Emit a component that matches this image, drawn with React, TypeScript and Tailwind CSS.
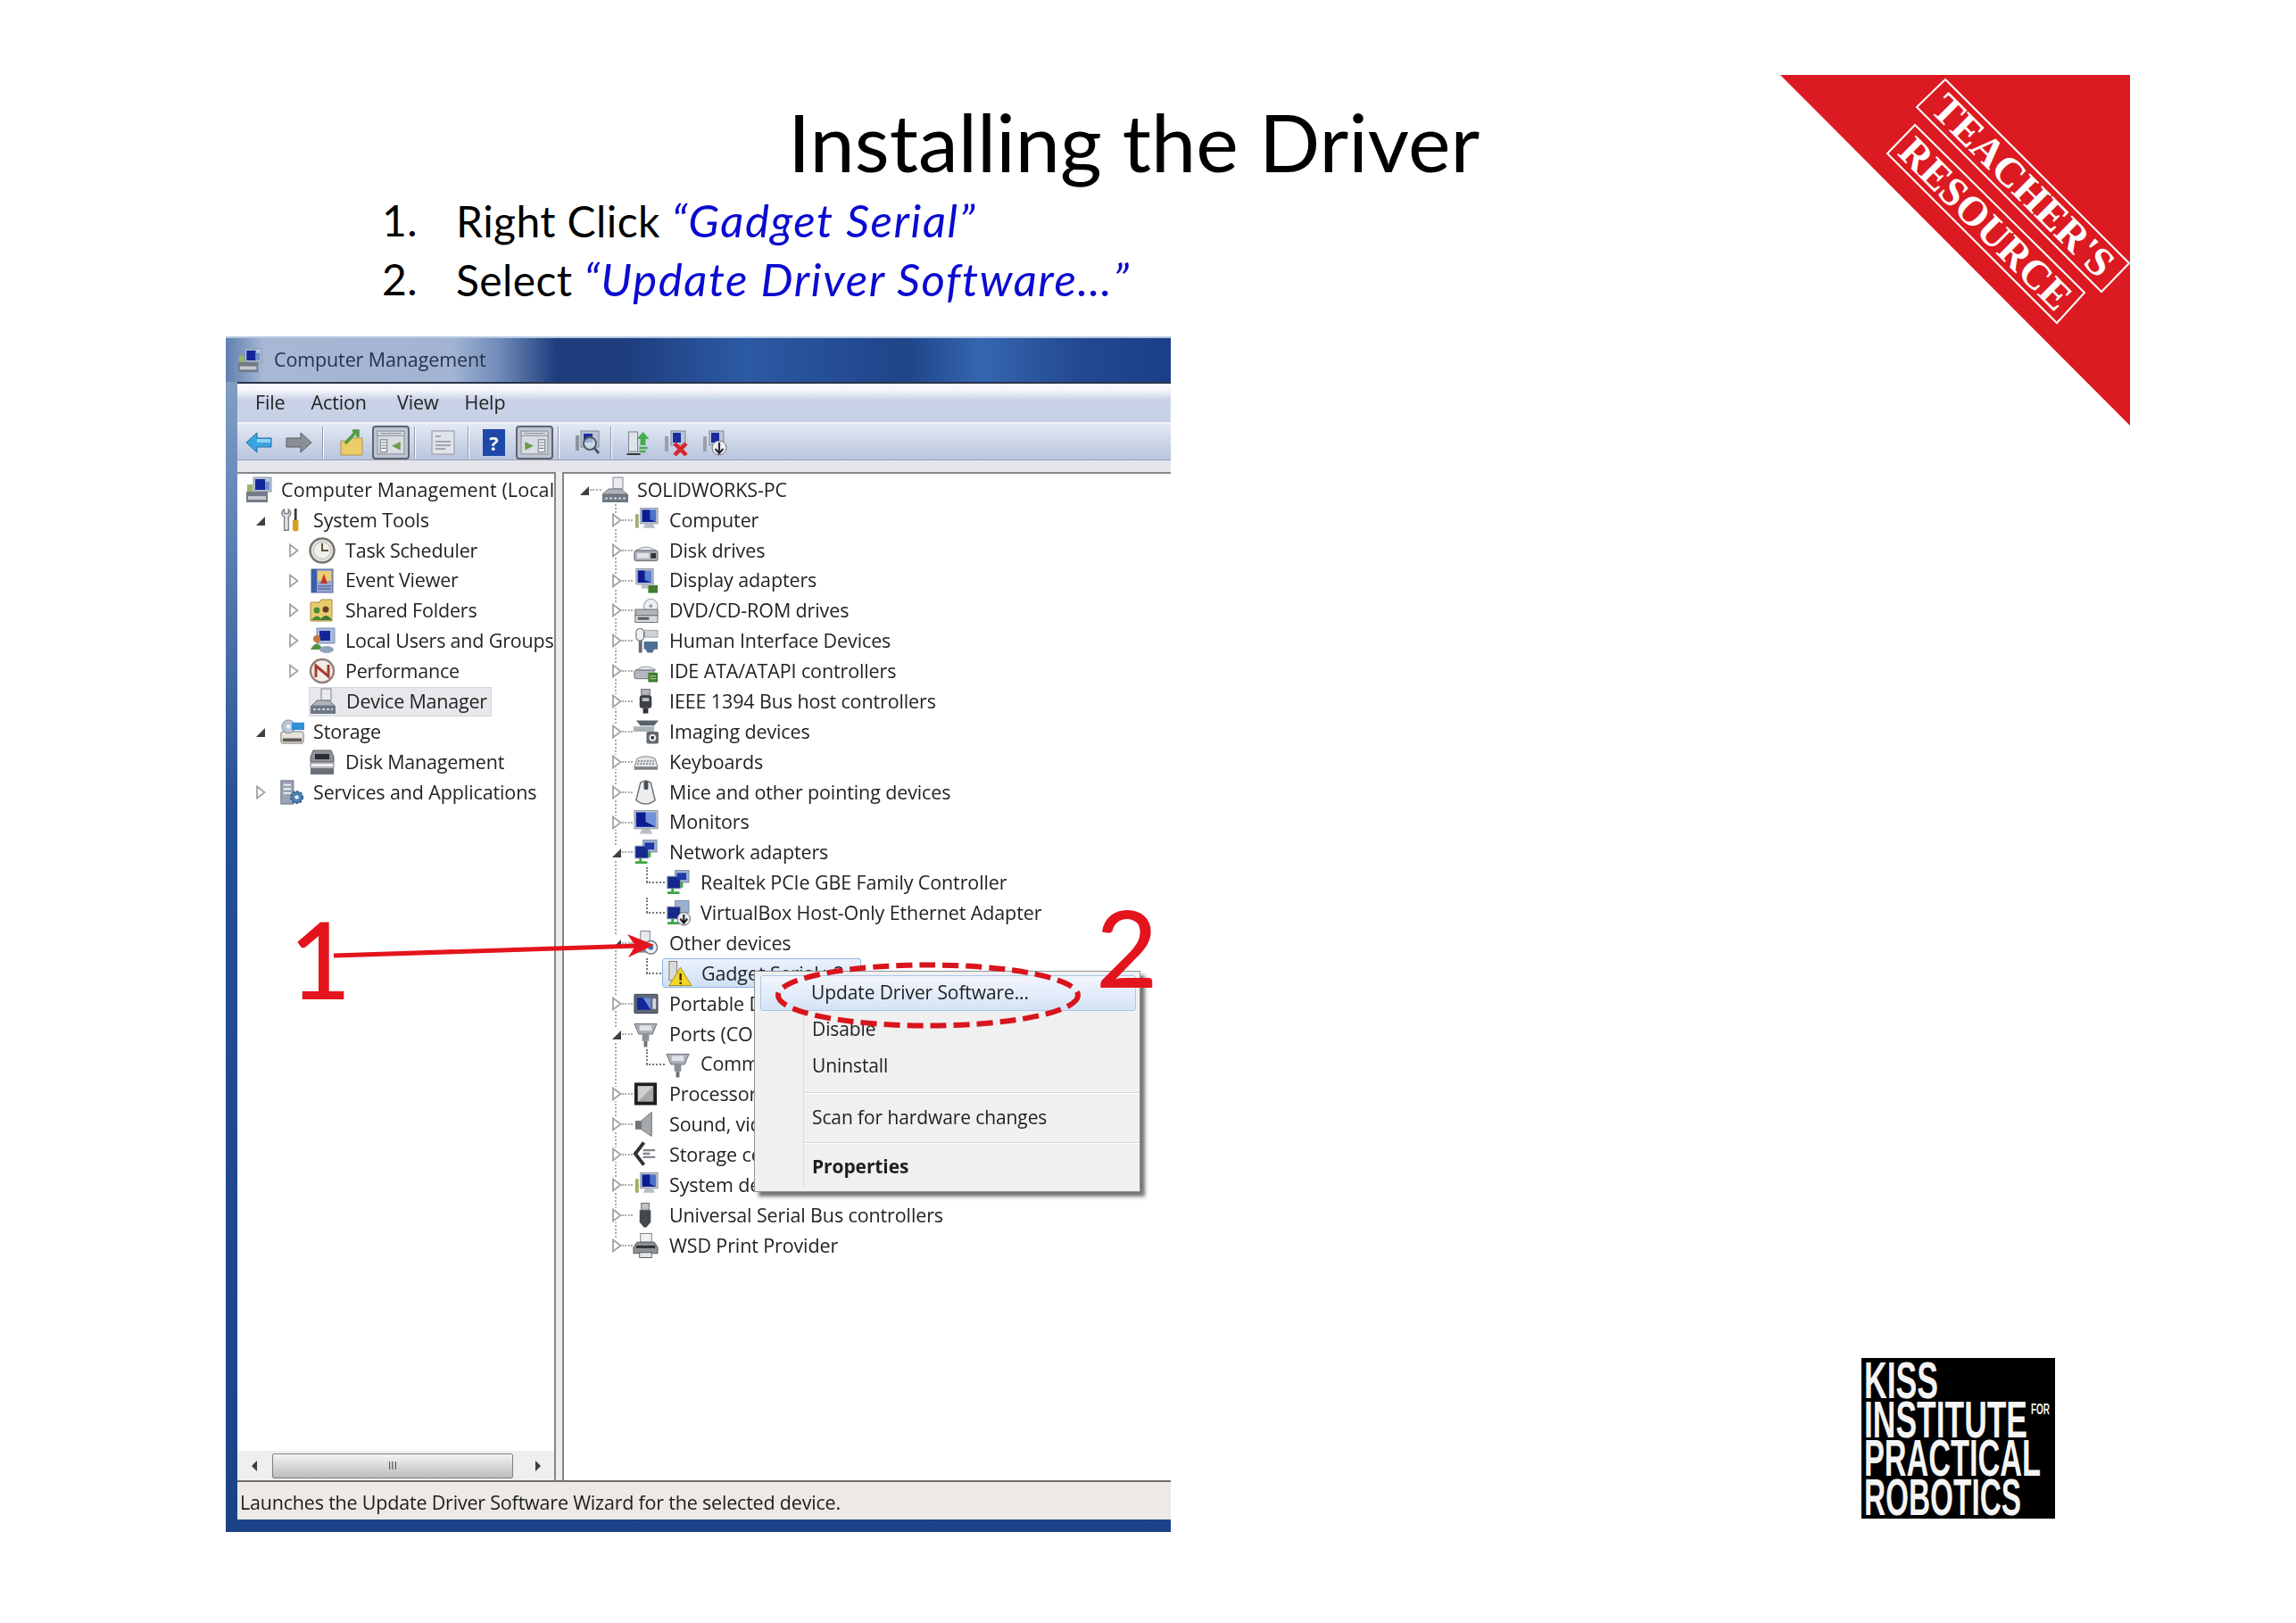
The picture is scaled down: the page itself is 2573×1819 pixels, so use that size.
import React from "react";

type IconKind =
  | "mgmt" | "tools" | "clock" | "event" | "shared" | "users" | "perf" | "devmgr" | "storage" | "diskmgmt" | "services"
  | "pc" | "computer" | "disk" | "display" | "dvd" | "hid" | "ide" | "ieee" | "imaging" | "keyboard" | "mouse" | "monitor"
  | "net" | "netdown" | "other" | "warn" | "portable" | "port" | "cpu" | "sound" | "ctrl" | "system" | "usb" | "printer";

function Icon({ kind, className }: { kind: IconKind; className: string }) {
  const body: Record<IconKind, React.ReactNode> = {
    mgmt: (<>
      <rect x="9" y="1" width="20" height="16" fill="#b9c4d6" stroke="#8995a8" />
      <rect x="11" y="3" width="11" height="12" fill="#14269c" />
      <rect x="22" y="6" width="5" height="9" fill="#6f8fd0" />
      <rect x="1" y="17" width="24" height="12" fill="#737b86" />
      <rect x="3" y="22" width="20" height="4" fill="#c5cad2" />
      <rect x="2" y="9" width="6" height="8" fill="#9bb46a" />
    </>),
    tools: (<>
      <path d="M6 2 C1 5 3 10 6 11 L6 27 L11 27 L11 11 C14 10 15 5 11 2 L11 7 L6 7 Z" fill="#e3e6ea" stroke="#7a7f88" strokeWidth="1.5" />
      <rect x="18" y="1" width="3" height="14" fill="#3c3c3c" />
      <path d="M16 15 H23 V27 Q19.5 30 16 27 Z" fill="#d6a21c" />
    </>),
    clock: (<>
      <circle cx="15" cy="15" r="13.5" fill="#dfe2e6" stroke="#7d7468" strokeWidth="2.5" />
      <circle cx="15" cy="15" r="9.5" fill="#f2f1e8" stroke="#b8b8b8" />
      <path d="M15 7 V15 H22" fill="none" stroke="#5d5240" strokeWidth="2" />
    </>),
    event: (<>
      <rect x="3" y="2" width="24" height="26" fill="#9aa5c9" stroke="#4e6199" />
      <rect x="3" y="2" width="6" height="26" fill="#3d5ea8" />
      <rect x="10" y="4" width="15" height="11" fill="#e9cf73" />
      <path d="M17 7 L21 18 L13 18 Z" fill="#c4352c" />
      <path d="M10 21 H25 M10 24 H25" stroke="#5c6fae" strokeWidth="1.5" />
    </>),
    shared: (<>
      <path d="M2 6 H12 L14 3 H26 V27 H2 Z" fill="#e9cd6c" stroke="#a48a38" />
      <circle cx="9" cy="15" r="3.5" fill="#4c8d3a" />
      <circle cx="19" cy="14" r="3.5" fill="#6a3b2a" />
      <path d="M3 26 Q9 17 15 26 Z" fill="#4c8d3a" />
      <path d="M13 26 Q19 16 26 26 Z" fill="#3b7a34" />
    </>),
    users: (<>
      <rect x="9" y="1" width="20" height="17" fill="#a9bbd8" stroke="#7b8dab" />
      <rect x="12" y="4" width="12" height="11" fill="#14269c" />
      <circle cx="9" cy="13" r="4" fill="#c9763a" />
      <path d="M2 25 Q9 12 16 25 Z" fill="#4f9140" />
      <ellipse cx="20" cy="25" rx="8" ry="4" fill="#8ea3bf" />
    </>),
    perf: (<>
      <circle cx="15" cy="15" r="13" fill="#f4eeea" stroke="#94807a" strokeWidth="2.5" />
      <path d="M8 22 V9 L22 21 V8" fill="none" stroke="#a83a2e" strokeWidth="3" />
    </>),
    devmgr: (<>
      <rect x="13" y="1" width="11" height="13" fill="#e9ebee" stroke="#7e848e" />
      <path d="M8 14 H22 L28 20 H2 Z" fill="#aeb3ba" stroke="#6f747c" />
      <rect x="1" y="20" width="28" height="9" fill="#6e7783" />
      <path d="M4 24 H26" stroke="#cfd3da" strokeWidth="2" strokeDasharray="3 2" />
    </>),
    storage: (<>
      <rect x="2" y="15" width="27" height="14" rx="2" fill="#e5e3dc" stroke="#73706a" />
      <rect x="4" y="23" width="23" height="4" fill="#5c5a54" />
      <circle cx="11" cy="9" r="8" fill="#b8c6d6" stroke="#7d8896" />
      <circle cx="11" cy="9" r="2.5" fill="#f1f4f7" />
      <rect x="15" y="4" width="15" height="9" fill="#2f8fd6" />
    </>),
    diskmgmt: (<>
      <path d="M5 2 H25 L28 9 V15 H2 V9 Z" fill="#8e9298" stroke="#5f6369" />
      <rect x="7" y="6" width="16" height="6" fill="#2a2c30" />
      <rect x="2" y="16" width="26" height="5" fill="#eceef0" stroke="#77797c" />
      <rect x="2" y="22" width="26" height="7" fill="#6b7078" />
    </>),
    services: (<>
      <rect x="2" y="1" width="15" height="28" fill="#9aa4b4" stroke="#60697a" />
      <path d="M5 6 H14 M5 11 H14 M5 16 H14" stroke="#f0f2f6" strokeWidth="2" />
      <circle cx="21" cy="21" r="7" fill="#4b83b6" stroke="#2f5f8e" strokeDasharray="3 1.5" strokeWidth="2" />
      <circle cx="21" cy="21" r="2.4" fill="#e3edf5" />
    </>),
    pc: (<>
      <rect x="13" y="1" width="11" height="13" fill="#e9ebee" stroke="#7e848e" />
      <path d="M8 14 H22 L29 20 H1 Z" fill="#aeb3ba" stroke="#6f747c" />
      <rect x="1" y="20" width="29" height="9" fill="#6e7783" />
      <path d="M4 24.5 H27" stroke="#cfd3da" strokeWidth="2" strokeDasharray="3 2" />
    </>),
    computer: (<>
      <rect x="9" y="1" width="20" height="18" fill="#bcc5d2" stroke="#8d97a6" />
      <rect x="11" y="3" width="16" height="14" fill="#4a73c8" />
      <path d="M11 3 H20 V14 L27 17 H11 Z" fill="#0e1c94" />
      <path d="M15 19 H23 L26 24 H12 Z" fill="#b9bdc4" />
      <rect x="3" y="8" width="4" height="16" fill="#9fb074" />
    </>),
    disk: (<>
      <path d="M4 15 Q15 7 27 15 Z" fill="#eef0f2" stroke="#8b8f95" />
      <rect x="2" y="15" width="27" height="12" rx="2" fill="#a9afb6" stroke="#62676d" />
      <rect x="5" y="18" width="14" height="6" fill="#dfe3e7" />
      <rect x="21" y="18" width="6" height="6" fill="#2e3136" />
    </>),
    display: (<>
      <rect x="4" y="1" width="20" height="18" fill="#bcc5d2" stroke="#8d97a6" />
      <rect x="6" y="3" width="16" height="14" fill="#5d83cf" />
      <path d="M6 3 H14 V14 L22 17 H6 Z" fill="#0e1c94" />
      <path d="M10 19 H18 V24 H10 Z" fill="#b9bdc4" />
      <rect x="18" y="20" width="11" height="9" fill="#3e7d2e" />
    </>),
    dvd: (<>
      <circle cx="21" cy="10" r="8" fill="#eceff2" stroke="#8a8f96" />
      <circle cx="21" cy="10" r="2" fill="#9aa0a8" />
      <rect x="3" y="14" width="26" height="7" fill="#b3b7bc" stroke="#686d73" />
      <rect x="3" y="21" width="26" height="8" fill="#d7dadd" stroke="#686d73" />
      <rect x="6" y="23" width="13" height="3" fill="#53565b" />
    </>),
    hid: (<>
      <rect x="4" y="1" width="9" height="14" rx="4" fill="#eef0f2" stroke="#5c6066" />
      <rect x="7" y="15" width="4" height="14" fill="#686c72" />
      <rect x="14" y="3" width="15" height="8" fill="#cfd3d8" stroke="#7e8288" strokeDasharray="2 1" />
      <path d="M13 16 H29 V25 H25 L23 29 H17 L15 25 H13 Z" fill="#4f6f95" />
    </>),
    ide: (<>
      <path d="M4 14 Q15 6 27 14 Z" fill="#eef0f2" stroke="#8b8f95" />
      <rect x="2" y="14" width="23" height="10" rx="2" fill="#b2b8be" stroke="#6b7076" />
      <rect x="18" y="17" width="11" height="11" fill="#3f7f30" />
      <path d="M20 21 H27 M20 24 H27" stroke="#c8d8b0" />
    </>),
    ieee: (<>
      <rect x="10" y="1" width="10" height="7" fill="#b2b6bb" stroke="#6a6e74" />
      <rect x="8" y="8" width="14" height="15" rx="3" fill="#3d4146" />
      <rect x="11" y="11" width="8" height="4" fill="#b9bdc2" />
      <rect x="12" y="23" width="6" height="6" fill="#2e3135" />
    </>),
    imaging: (<>
      <path d="M4 2 H30 L25 8 H9 Z" fill="#56636f" />
      <path d="M1 9 H25 V15 H1 Z" fill="#aab2ba" />
      <rect x="16" y="15" width="14" height="14" rx="2" fill="#62686e" />
      <circle cx="23" cy="22" r="4" fill="#f0f2f4" />
      <circle cx="23" cy="22" r="2" fill="#33373b" />
    </>),
    keyboard: (<>
      <path d="M5 11 Q15 6 26 11 L29 21 H2 Z" fill="#e3e6e9" stroke="#7c8187" />
      <path d="M6 14 H25 M5 17 H26" stroke="#8f959b" strokeWidth="2" strokeDasharray="2 1.5" />
      <rect x="2" y="21" width="27" height="3" fill="#7b8086" />
    </>),
    mouse: (<>
      <path d="M9 4 Q15 -1 21 4 L26 24 Q15 33 4 24 Z" fill="#eceef0" stroke="#6b6f75" strokeWidth="1.5" />
      <rect x="13" y="2" width="5" height="10" rx="2" fill="#4a4e54" />
    </>),
    monitor: (<>
      <rect x="2" y="1" width="27" height="21" fill="#bcc5d2" stroke="#8d97a6" />
      <rect x="4" y="3" width="23" height="17" fill="#6f93d8" />
      <path d="M4 3 H15 V14 L27 20 H4 Z" fill="#0e1c94" />
      <path d="M11 22 H20 L23 28 H8 Z" fill="#b9bdc4" />
    </>),
    net: (<>
      <rect x="12" y="1" width="16" height="14" fill="#9cb0cf" stroke="#7a8cab" />
      <rect x="3" y="8" width="15" height="14" fill="#16288c" stroke="#7a8cab" />
      <rect x="14" y="4" width="11" height="8" fill="#1d3aa6" />
      <path d="M9 22 V26 M3 27 H17" stroke="#3fa548" strokeWidth="3" />
      <rect x="18" y="15" width="3" height="6" fill="#3fa548" />
    </>),
    netdown: (<>
      <rect x="12" y="1" width="16" height="14" fill="#9cb0cf" stroke="#7a8cab" />
      <rect x="3" y="8" width="15" height="14" fill="#16288c" stroke="#7a8cab" />
      <path d="M9 22 V26 M3 27 H17" stroke="#3fa548" strokeWidth="3" />
      <circle cx="22" cy="22" r="7.5" fill="#e8ebef" stroke="#5f6670" />
      <path d="M22 17 V26 M18 22 L22 27 L26 22" stroke="#1e2228" strokeWidth="2.2" fill="none" />
    </>),
    other: (<>
      <rect x="9" y="1" width="11" height="18" fill="#e7e9ec" stroke="#7f848c" />
      <rect x="3" y="18" width="18" height="8" fill="#7e858e" />
      <circle cx="21" cy="20" r="7.5" fill="#eef2f6" stroke="#6d7782" strokeWidth="1.5" />
      <circle cx="21" cy="20" r="3" fill="#3c6fb8" />
    </>),
    warn: (<>
      <rect x="4" y="1" width="9" height="22" fill="#d8dbde" stroke="#7f7f72" />
      <path d="M17 8 L30 29 H4 Z" fill="#f3d52a" stroke="#a58c16" />
      <rect x="16" y="15" width="2.5" height="8" fill="#3a3208" />
      <rect x="16" y="25" width="2.5" height="2.5" fill="#3a3208" />
    </>),
    portable: (<>
      <rect x="2" y="4" width="27" height="22" rx="1" fill="#5f6874" stroke="#3c434c" />
      <rect x="5" y="8" width="16" height="14" fill="#14269c" />
      <path d="M12 8 H21 V22 Z" fill="#6f93d8" />
      <rect x="23" y="9" width="4" height="12" fill="#d4d7db" />
    </>),
    port: (<>
      <path d="M2 3 H28 L23 15 H7 Z" fill="#aab0b7" stroke="#6a6f76" />
      <rect x="8" y="5" width="14" height="6" fill="#dfe2e6" />
      <rect x="11" y="15" width="8" height="8" fill="#8b9097" />
      <rect x="13" y="23" width="4" height="7" fill="#6d7279" />
    </>),
    cpu: (<>
      <rect x="2" y="2" width="26" height="26" fill="#1f1f1f" />
      <rect x="6" y="6" width="18" height="18" fill="#a8a8a8" />
      <path d="M6 6 H24 L6 24 Z" fill="#cfcfcf" />
    </>),
    sound: (<>
      <rect x="3" y="11" width="7" height="10" fill="#717579" />
      <path d="M10 11 L22 1 V29 L10 21 Z" fill="#a4a8ac" stroke="#6f7377" />
    </>),
    ctrl: (<>
      <path d="M13 1 L3 14 L13 27" fill="none" stroke="#303337" strokeWidth="4" />
      <path d="M12 10 H26 M12 14 H20 M12 18 H26" stroke="#82878d" strokeWidth="2.4" />
    </>),
    system: (<>
      <rect x="9" y="1" width="20" height="18" fill="#bcc5d2" stroke="#8d97a6" />
      <rect x="11" y="3" width="16" height="14" fill="#4a73c8" />
      <path d="M11 3 H20 V14 L27 17 H11 Z" fill="#0e1c94" />
      <path d="M15 19 H23 L26 24 H12 Z" fill="#b9bdc4" />
      <rect x="3" y="8" width="4" height="16" fill="#9bb35a" />
    </>),
    usb: (<>
      <rect x="10" y="1" width="9" height="8" fill="#c0c3c7" stroke="#65696e" />
      <path d="M8 9 H21 V23 L16 29 H13 L8 23 Z" fill="#45494e" />
    </>),
    printer: (<>
      <rect x="9" y="1" width="13" height="10" fill="#f0f1f3" stroke="#7b7f85" />
      <path d="M5 11 H25 L29 17 V24 H1 V17 Z" fill="#8c9096" stroke="#565a60" />
      <rect x="4" y="15" width="22" height="3" fill="#2e3034" />
      <rect x="8" y="23" width="14" height="6" fill="#e4e6e9" stroke="#55595f" />
    </>),
  };
  return (
    <svg viewBox="0 0 30 30" className={className}>
      {body[kind]}
    </svg>
  );
}

function Expander({ type }: { type?: "open" | "closed" }) {
  return (
    <svg viewBox="0 0 12 16" className="w-[12px] h-[16px] shrink-0 bg-white">
      {type === "closed" && <polygon points="2,1.5 10.5,8 2,14.5" fill="#fff" stroke="#a3a3a3" strokeWidth="1.8" />}
      {type === "open" && <polygon points="11,4 11,14 1,14" fill="#3f3f3f" />}
    </svg>
  );
}

type Left = { label: string; icon: IconKind; level: 0 | 1 | 2; exp?: "open" | "closed"; selected?: boolean };

const leftRows: Left[] = [
  { label: "Computer Management (Local)", icon: "mgmt", level: 0 },
  { label: "System Tools", icon: "tools", level: 1, exp: "open" },
  { label: "Task Scheduler", icon: "clock", level: 2, exp: "closed" },
  { label: "Event Viewer", icon: "event", level: 2, exp: "closed" },
  { label: "Shared Folders", icon: "shared", level: 2, exp: "closed" },
  { label: "Local Users and Groups", icon: "users", level: 2, exp: "closed" },
  { label: "Performance", icon: "perf", level: 2, exp: "closed" },
  { label: "Device Manager", icon: "devmgr", level: 2, selected: true },
  { label: "Storage", icon: "storage", level: 1, exp: "open" },
  { label: "Disk Management", icon: "diskmgmt", level: 2 },
  { label: "Services and Applications", icon: "services", level: 1, exp: "closed" },
];

function LeftRow({ row }: { row: Left }) {
  return (
    <div className="h-[33.88px] flex items-center whitespace-nowrap">
      {row.level === 0 && (
        <div className="flex items-center pl-[9px]">
          <Icon kind={row.icon} className="w-[30px] h-[30px] shrink-0" />
          <span className="ml-[10px] tracking-[0.1px]">{row.label}</span>
        </div>
      )}
      {row.level === 1 && (
        <div className="flex items-center pl-[20px]">
          <Expander type={row.exp} />
          <Icon kind={row.icon} className="ml-[15px] w-[28px] h-[30px] shrink-0" />
          <span className="ml-[10px]">{row.label}</span>
        </div>
      )}
      {row.level === 2 && (
        <div className="flex items-center pl-[57px]">
          <Expander type={row.exp} />
          <div className={row.selected ? "ml-[11px] flex items-center bg-[#e8e8ec] border border-[#d4d4da] h-[33px] pr-[4px]" : "ml-[11px] flex items-center h-[33px]"}>
            <Icon kind={row.icon} className="w-[30px] h-[30px] shrink-0" />
            <span className="ml-[11px] tracking-[-0.2px]">{row.label}</span>
          </div>
        </div>
      )}
    </div>
  );
}

type Right = { label: string; icon: IconKind; level: 0 | 1 | 2; exp?: "open" | "closed"; selected?: boolean };

const rightRows: Right[] = [
  { label: "SOLIDWORKS-PC", icon: "pc", level: 0, exp: "open" },
  { label: "Computer", icon: "computer", level: 1, exp: "closed" },
  { label: "Disk drives", icon: "disk", level: 1, exp: "closed" },
  { label: "Display adapters", icon: "display", level: 1, exp: "closed" },
  { label: "DVD/CD-ROM drives", icon: "dvd", level: 1, exp: "closed" },
  { label: "Human Interface Devices", icon: "hid", level: 1, exp: "closed" },
  { label: "IDE ATA/ATAPI controllers", icon: "ide", level: 1, exp: "closed" },
  { label: "IEEE 1394 Bus host controllers", icon: "ieee", level: 1, exp: "closed" },
  { label: "Imaging devices", icon: "imaging", level: 1, exp: "closed" },
  { label: "Keyboards", icon: "keyboard", level: 1, exp: "closed" },
  { label: "Mice and other pointing devices", icon: "mouse", level: 1, exp: "closed" },
  { label: "Monitors", icon: "monitor", level: 1, exp: "closed" },
  { label: "Network adapters", icon: "net", level: 1, exp: "open" },
  { label: "Realtek PCIe GBE Family Controller", icon: "net", level: 2 },
  { label: "VirtualBox Host-Only Ethernet Adapter", icon: "netdown", level: 2 },
  { label: "Other devices", icon: "other", level: 1, exp: "open" },
  { label: "Gadget Serial v2.4", icon: "warn", level: 2, selected: true },
  { label: "Portable Devices", icon: "portable", level: 1, exp: "closed" },
  { label: "Ports (COM & LPT)", icon: "port", level: 1, exp: "open" },
  { label: "Communications Port (COM1)", icon: "port", level: 2 },
  { label: "Processors", icon: "cpu", level: 1, exp: "closed" },
  { label: "Sound, video and game controllers", icon: "sound", level: 1, exp: "closed" },
  { label: "Storage controllers", icon: "ctrl", level: 1, exp: "closed" },
  { label: "System devices", icon: "system", level: 1, exp: "closed" },
  { label: "Universal Serial Bus controllers", icon: "usb", level: 1, exp: "closed" },
  { label: "WSD Print Provider", icon: "printer", level: 1, exp: "closed" },
];

function RightRow({ row }: { row: Right }) {
  if (row.level === 0) {
    return (
      <div className="h-[33.88px] flex items-center whitespace-nowrap pl-[17px]">
        <Expander type={row.exp} />
        <div className="w-[13px] border-t-2 border-dotted border-[#aaa]" />
        <Icon kind={row.icon} className="w-[30px] h-[30px] shrink-0" />
        <span className="ml-[10px]">{row.label}</span>
      </div>
    );
  }
  if (row.level === 1) {
    return (
      <div className="h-[33.88px] flex items-center whitespace-nowrap pl-[53px]">
        <Expander type={row.exp} />
        <div className="w-[12px] border-t-2 border-dotted border-[#aaa]" />
        <Icon kind={row.icon} className="w-[29px] h-[30px] shrink-0" />
        <span className="ml-[12px]">{row.label}</span>
      </div>
    );
  }
  return (
    <div className="relative h-[33.88px] flex items-center whitespace-nowrap pl-[92px]">
      <div className="absolute left-[92px] top-0 h-[17px] border-l-2 border-dotted border-[#777]" />
      <div className="w-[21px] border-t-2 border-dotted border-[#777]" />
      <div className={row.selected ? "flex items-center h-[33px] w-[223px] -ml-[3px] pl-[3px] rounded-[3px] bg-[linear-gradient(180deg,#eaf2fc,#cfe0f5)] border border-[#8fb2de]" : "flex items-center h-[33px]"}>
        <Icon kind={row.icon} className="w-[29px] h-[30px] shrink-0" />
        <span className="ml-[11px]">{row.label}</span>
      </div>
    </div>
  );
}

function Sep() {
  return <div className="w-[2px] h-[36px] bg-[#8f98aa] border-r border-white shrink-0" />;
}

function ToolFrame({ flip }: { flip?: boolean }) {
  return (
    <div className="w-[42px] h-[38px] shrink-0 rounded-[4px] border-2 border-[#5c6470] bg-[#bfc5d0] flex items-center justify-center">
      <svg viewBox="0 0 30 26" className="w-[32px] h-[28px]">
        <rect x="1" y="1" width="28" height="24" fill="#d9dce2" stroke="#8d939c" />
        <path d="M1 6 H29 M4 3.5 H26" stroke="#8d939c" strokeWidth="1" />
        <rect x={flip ? 19 : 4} y="10" width="7" height="13" fill="#eef0f3" stroke="#7a818b" />
        <path d={flip ? "M5 12 L14 16.5 L5 21 Z" : "M25 12 L16 16.5 L25 21 Z"} fill="#6f9a4a" />
        <path d={flip ? "M20 13 H25 M20 16 H25 M20 19 H25" : "M5 13 H10 M5 16 H10 M5 19 H10"} stroke="#7a818b" />
      </svg>
    </div>
  );
}

function Toolbar() {
  return (
    <div className="h-[41px] pl-[9px] pt-[2px] flex items-center bg-[linear-gradient(180deg,#e3e8f3,#b9c5de)] border-b border-[#9aa4b8]">
      <svg viewBox="0 0 30 26" className="w-[30px] h-[26px] shrink-0">
        <path d="M1 13 L13 2 V8 H29 V18 H13 V24 Z" fill="#3aa4e0" stroke="#1c6ea8" />
        <rect x="13" y="9" width="15" height="4" fill="#8ed2f4" />
      </svg>
      <svg viewBox="0 0 30 26" className="ml-[15px] w-[30px] h-[26px] shrink-0">
        <path d="M29 13 L17 2 V8 H1 V18 H17 V24 Z" fill="#8a8f96" stroke="#5a5f66" />
      </svg>
      <div className="ml-[11px]"><Sep /></div>
      <svg viewBox="0 0 26 30" className="ml-[18px] w-[26px] h-[30px] shrink-0">
        <path d="M1 13 H8 L10 10 H25 V29 H1 Z" fill="#eccb6a" stroke="#b5934a" />
        <path d="M6 16 L18 3 M14 2 H20 V9" stroke="#4f9c3e" strokeWidth="3.5" fill="none" />
      </svg>
      <div className="ml-[10px]"><ToolFrame /></div>
      <div className="ml-[5px]"><Sep /></div>
      <svg viewBox="0 0 27 30" className="ml-[17px] w-[27px] h-[30px] shrink-0">
        <rect x="1" y="2" width="25" height="26" fill="#dfe3ea" stroke="#8f949c" />
        <path d="M5 8 H11 M5 14 H22 M5 18 H22 M5 22 H16" stroke="#8f949c" strokeWidth="1.6" />
      </svg>
      <div className="ml-[14px]"><Sep /></div>
      <div className="ml-[15px] w-[25px] h-[30px] shrink-0 bg-[#1f49a8] text-white text-[22px] leading-[30px] font-bold text-center">?</div>
      <div className="ml-[12px]"><ToolFrame flip /></div>
      <div className="ml-[5px]"><Sep /></div>
      <svg viewBox="0 0 30 30" className="ml-[16px] w-[30px] h-[30px] shrink-0">
        <rect x="8" y="2" width="20" height="18" fill="#b9c4d6" stroke="#7e8a9c" />
        <rect x="11" y="5" width="10" height="10" fill="#1a2c9c" />
        <rect x="2" y="7" width="4" height="17" fill="#8f949c" />
        <circle cx="18" cy="16" r="7" fill="#d8e4f2" fillOpacity="0.7" stroke="#4f5965" strokeWidth="2" />
        <path d="M23 21 L28 27" stroke="#4f5965" strokeWidth="3" />
      </svg>
      <div className="ml-[11px]"><Sep /></div>
      <svg viewBox="0 0 27 30" className="ml-[15px] w-[28px] h-[30px] shrink-0">
        <rect x="3" y="3" width="10" height="22" fill="#dfe3e8" stroke="#7d838c" />
        <path d="M1 28 H16" stroke="#33373c" strokeWidth="2" />
        <path d="M19 3 L26 11 H22 V18 H16 V11 H12 Z" fill="#45ad4d" />
        <path d="M15 21 H24 M15 25 H22" stroke="#45ad4d" strokeWidth="2.5" />
      </svg>
      <svg viewBox="0 0 30 30" className="ml-[14px] w-[30px] h-[30px] shrink-0">
        <rect x="2" y="8" width="4" height="17" fill="#9aa0a8" />
        <rect x="9" y="2" width="16" height="16" fill="#b9c4d6" stroke="#7e8a9c" />
        <rect x="11" y="4" width="9" height="11" fill="#1a2c9c" />
        <path d="M13 16 L26 29 M26 16 L13 29" stroke="#d8252b" strokeWidth="4.5" />
      </svg>
      <svg viewBox="0 0 30 30" className="ml-[13px] w-[30px] h-[30px] shrink-0">
        <rect x="2" y="8" width="4" height="17" fill="#9aa0a8" />
        <rect x="9" y="2" width="16" height="16" fill="#b9c4d6" stroke="#7e8a9c" />
        <rect x="11" y="4" width="9" height="11" fill="#1a2c9c" />
        <circle cx="20" cy="21" r="8" fill="#eef1f4" stroke="#6c737c" />
        <path d="M20 15 V26 M15.5 22 L20 27 L24.5 22" stroke="#2a2e33" strokeWidth="2.2" fill="none" />
      </svg>
    </div>
  );
}

function ContextMenu() {
  return (
    <div className="absolute left-[845px] top-[1088px] w-[433px] h-[248px] bg-[#f0f0f0] border border-[#8e9299] shadow-[5px_5px_4px_rgba(0,0,0,0.55)] pt-[4px] text-[#1f1f1f] font-['Open_Sans',sans-serif] text-[21px] tracking-[-0.1px] blur-[0.35px]">
      <div className="ml-[6px] mr-[4px] h-[40px] flex items-center rounded-[3px] border border-[#a9c5ea] bg-[linear-gradient(180deg,#f2f6fd,#d5e3f6)] pl-[56px]">
        Update Driver Software...
      </div>
      <div className="ml-[54px] h-[41px] flex items-center border-l border-[#dcdcdc] pl-[9px]">Disable</div>
      <div className="ml-[54px] h-[41px] flex items-center border-l border-[#dcdcdc] pl-[9px]">Uninstall</div>
      <div className="ml-[54px] h-[20px] flex items-center border-l border-[#dcdcdc]">
        <div className="w-full border-t border-b border-t-[#d7d7d7] border-b-white h-[2px]" />
      </div>
      <div className="ml-[54px] h-[36px] flex items-center border-l border-[#dcdcdc] pl-[9px]">Scan for hardware changes</div>
      <div className="ml-[54px] h-[20px] flex items-center border-l border-[#dcdcdc]">
        <div className="w-full border-t border-b border-t-[#d7d7d7] border-b-white h-[2px]" />
      </div>
      <div className="ml-[54px] h-[40px] flex items-center border-l border-[#dcdcdc] pl-[9px] pb-[6px] font-bold">Properties</div>
    </div>
  );
}

function Window() {
  return (
    <div className="w-[1059px] h-[1340px] flex flex-col bg-[linear-gradient(180deg,#8ea6c9_0%,#6f90bd_10%,#234f93_40%,#1c4387_100%)] font-['Open_Sans',sans-serif] text-[#232323] text-[21.5px] tracking-[-0.12px] blur-[0.35px]">
      <div className="h-[51px] shrink-0 flex items-center pl-[13px] border-t-2 border-[#b5c8e2] bg-[linear-gradient(90deg,#5f7fb0_0%,#a7b8d4_4%,#a2b4d2_24%,#6f8ab8_29%,#1e3d7d_35%,#1e3d7d_42%,#2c5aa4_55%,#1f4488_72%,#3566b0_80%,#234a90_90%,#1a3e88_100%)]">
        <Icon kind="mgmt" className="w-[28px] h-[28px] shrink-0" />
        <span className="ml-[13px] text-[#24324e]">Computer Management</span>
      </div>
      <div className="flex-1 ml-[13px] flex flex-col min-h-0 bg-white border-t-2 border-[#28344a]">
        <div className="h-[45px] shrink-0 flex items-center gap-[29px] pl-[20px] bg-[linear-gradient(180deg,#fbfcfe_0%,#f3f5fa_18%,#c9d2e7_42%,#c7d1e6_100%)] border-b-2 border-[#f1f3f8]">
          <span>File</span>
          <span>Action</span>
          <span className="ml-[5px]">View</span>
          <span>Help</span>
        </div>
        <Toolbar />
        <div className="h-[13px] shrink-0 bg-[#e3e5ea]" />
        <div className="flex-1 flex min-h-0 bg-[#eeeef0]">
          <div className="w-[357px] shrink-0 flex flex-col border-t-2 border-r-2 border-[#85878c] bg-white overflow-hidden">
            <div className="flex-1 pt-[1px] overflow-hidden">
              {leftRows.map((r) => (
                <LeftRow key={r.label} row={r} />
              ))}
            </div>
            <div className="h-[33px] shrink-0 flex items-center bg-[#efefef] pl-[15px]">
              <svg viewBox="0 0 8 14" className="w-[8px] h-[14px] shrink-0"><polygon points="7,1 7,13 1,7" fill="#3c3c3c" /></svg>
              <div className="ml-[16px] w-[270px] h-[28px] rounded-[2px] border border-[#7f7f7f] bg-[linear-gradient(180deg,#f4f4f4,#d8d8d8_50%,#bcbcbc)] flex items-center justify-center text-[12px] text-[#444] tracking-[0px]">III</div>
              <svg viewBox="0 0 8 14" className="ml-[24px] w-[8px] h-[14px] shrink-0"><polygon points="1,1 1,13 7,7" fill="#3c3c3c" /></svg>
            </div>
          </div>
          <div className="ml-[7px] flex-1 relative border-t-2 border-l-2 border-[#85878c] bg-white pt-[1px] overflow-hidden">
            <div className="absolute left-[57px] top-[34px] h-[830px] border-l-2 border-dotted border-[#aaa]" />
            <div className="relative">
              {rightRows.map((r) => (
                <RightRow key={r.label} row={r} />
              ))}
            </div>
          </div>
        </div>
        <div className="h-[44px] shrink-0 flex items-center pl-[3px] pt-[5px] bg-[#ece9e6] border-t-2 border-[#6f6f6f] text-[#1c1c1c] tracking-[-0.2px]">
          Launches the Update Driver Software Wizard for the selected device.
        </div>
      </div>
      <div className="h-[14px] shrink-0" />
    </div>
  );
}

function Annotations() {
  return (
    <>
      <svg viewBox="0 0 2573 1819" className="absolute left-0 top-0 w-[2573px] h-[1819px] pointer-events-none">
        <path d="M374 1071 L716 1060" stroke="#e4141c" strokeWidth="5" fill="none" />
        <polygon points="733,1059 703,1047 712,1060 704,1073" fill="#e4141c" />
        <ellipse cx="1040" cy="1115.5" rx="168" ry="34" fill="none" stroke="#d8141c" strokeWidth="6" strokeDasharray="18 8" />
      </svg>
      <span className="absolute left-[324px] top-[999px] text-[#e4141c] text-[120px] leading-[150px] font-medium font-['Lato',sans-serif]">1</span>
      <span className="absolute left-[1228px] top-[986px] text-[#e4141c] text-[120px] leading-[150px] font-medium font-['Lato',sans-serif]">2</span>
    </>
  );
}

function Ribbon() {
  return (
    <svg viewBox="0 0 392 393" className="w-[392px] h-[393px]">
      <polygon points="0,0 392,0 392,393" fill="#dc1a21" />
      <polygon points="185,5 153,36 360,243 391,211" fill="none" stroke="#fff" strokeWidth="2" />
      <polygon points="151,56 120,88 310,278 341,244" fill="none" stroke="#fff" strokeWidth="2" />
      <text x="272" y="139" transform="rotate(45 272 124)" textAnchor="middle" textLength="268" lengthAdjust="spacingAndGlyphs" fontFamily="'Liberation Serif', serif" fontWeight="700" fontSize="46" fill="#fff">TEACHER'S</text>
      <text x="230" y="182" transform="rotate(45 230 167)" textAnchor="middle" textLength="252" lengthAdjust="spacingAndGlyphs" fontFamily="'Liberation Serif', serif" fontWeight="700" fontSize="46" fill="#fff">RESOURCE</text>
    </svg>
  );
}

function Kiss() {
  const f = { fontFamily: "'Liberation Sans', sans-serif", fontWeight: 700, fill: "#f4f4f4" };
  return (
    <svg viewBox="0 0 217 180" className="w-[217px] h-[180px] bg-black">
      <text x="3" y="45" textLength="83" lengthAdjust="spacingAndGlyphs" fontSize="57" {...f}>KISS</text>
      <text x="3" y="89" textLength="183" lengthAdjust="spacingAndGlyphs" fontSize="57" {...f}>INSTITUTE</text>
      <text x="190" y="63" textLength="21" lengthAdjust="spacingAndGlyphs" fontSize="16" {...f}>FOR</text>
      <text x="3" y="132" textLength="198" lengthAdjust="spacingAndGlyphs" fontSize="57" {...f}>PRACTICAL</text>
      <text x="3" y="176" textLength="176" lengthAdjust="spacingAndGlyphs" fontSize="57" {...f}>ROBOTICS</text>
    </svg>
  );
}

export default function App() {
  return (
    <div className="relative w-[2573px] h-[1819px] bg-white flex pt-[84px] pl-[253px] overflow-hidden font-['Lato',sans-serif] text-black">
      <div className="w-[1742px] shrink-0">
        <h1 className="ml-[630px] h-[130px] pt-[14px] text-[90px] leading-[120px] whitespace-nowrap">Installing the Driver</h1>
        <ol className="ml-[175px] text-[48px] tracking-[0.4px] leading-[66px]">
          <li className="flex h-[66px]">
            <span className="w-[83px]">1.</span>
            <span>
              Right Click <em className="text-[#0a0ad0] text-[51px] tracking-[1.6px]">“Gadget Serial”</em>
            </span>
          </li>
          <li className="flex h-[66px]">
            <span className="w-[83px]">2.</span>
            <span>
              Select <em className="text-[#0a0ad0] text-[51px] tracking-[1.6px]">“Update Driver Software…”</em>
            </span>
          </li>
        </ol>
        <div className="mt-[31px]">
          <Window />
        </div>
      </div>
      <div className="w-[392px] shrink-0">
        <Ribbon />
        <div className="mt-[1045px] ml-[91px]">
          <Kiss />
        </div>
      </div>
      <ContextMenu />
      <Annotations />
    </div>
  );
}
